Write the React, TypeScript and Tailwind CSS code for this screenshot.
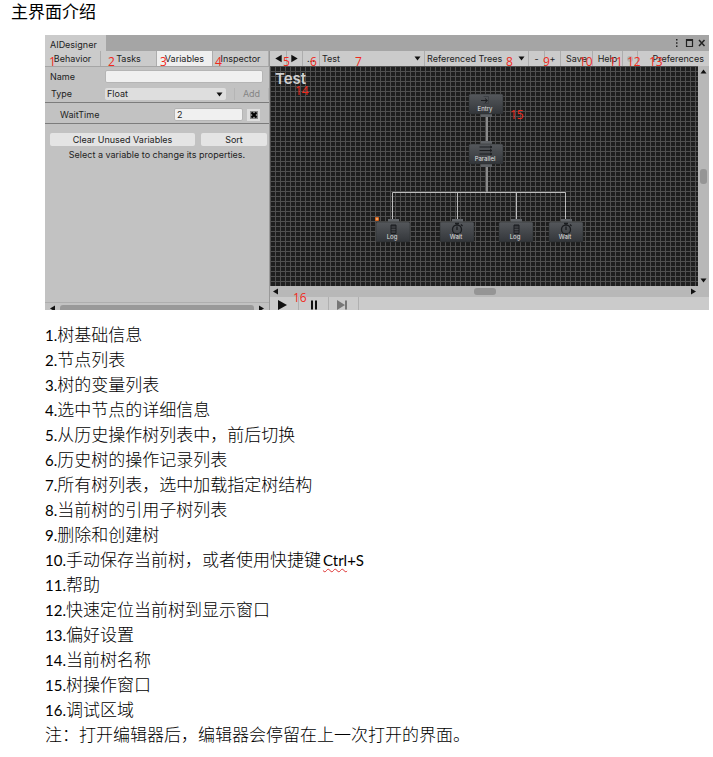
import React from "react";

function Mark({ n, at }: { n: string; at: string }) {
  return (
    <span className={`absolute font-['Open_Sans',sans-serif] text-[12px] leading-[14px] text-[#f0291c] ${at}`}>{n}</span>
  );
}

const marks: [string, string][] = [
  ["1", "left-[4px] top-[20px]"],
  ["2", "left-[63px] top-[20px]"],
  ["3", "left-[115px] top-[20px]"],
  ["4", "left-[170px] top-[20px]"],
  ["5", "left-[238px] top-[20px]"],
  ["6", "left-[265px] top-[20px]"],
  ["7", "left-[310px] top-[20px]"],
  ["8", "left-[461px] top-[20px]"],
  ["9", "left-[498px] top-[20px]"],
  ["10", "left-[534px] top-[20px]"],
  ["11", "left-[564px] top-[20px]"],
  ["12", "left-[582px] top-[20px]"],
  ["13", "left-[604px] top-[20px]"],
  ["14", "left-[250px] top-[49px]"],
  ["15", "left-[465px] top-[73px]"],
  ["16", "left-[248px] top-[256px]"],
];

function Arrow({
  dir,
  size = "size-[7px]",
  className = "",
}: {
  dir: "left" | "right" | "up" | "down";
  size?: string;
  className?: string;
}) {
  const d = {
    left: "M6 0.5L1 3.5L6 6.5Z",
    right: "M1 0.5L6 3.5L1 6.5Z",
    up: "M0.5 5.5L3.5 1.5L6.5 5.5Z",
    down: "M0.5 1.5L6.5 1.5L3.5 5.5Z",
  }[dir];
  return (
    <svg viewBox="0 0 7 7" className={`shrink-0 fill-[#111] ${size} ${className}`} aria-hidden="true">
      <path d={d} />
    </svg>
  );
}

function Dropdown({ label, value, className }: { label: string; value: string; className: string }) {
  return (
    <div className={`relative flex items-center ${className}`}>
      <select aria-label={label} className="h-full w-full appearance-none bg-transparent pl-[2px] outline-none">
        <option>{value}</option>
      </select>
      <Arrow dir="down" className="pointer-events-none absolute right-[3px]" />
    </div>
  );
}

const boxes: { name: string; kind: string; x: number; y: number; top: boolean; bottom: boolean }[] = [
  { name: "Entry", kind: "entry", x: 199, y: 28, top: false, bottom: true },
  { name: "Parallel", kind: "parallel", x: 199, y: 78, top: true, bottom: true },
  { name: "Log", kind: "log", x: 106, y: 156, top: true, bottom: false },
  { name: "Wait", kind: "wait", x: 170, y: 156, top: true, bottom: false },
  { name: "Log", kind: "log", x: 229, y: 156, top: true, bottom: false },
  { name: "Wait", kind: "wait", x: 279, y: 156, top: true, bottom: false },
];

function Glyph({ kind }: { kind: string }) {
  return (
    <g fill="none" stroke="#1b1d20" strokeWidth="1">
      {kind === "entry" && (
        <>
          <path d="M14.5 2.5h5v7h-5" stroke="#3a3d41" strokeWidth="0.8" />
          <path d="M12 6.500h6M16 4.500l2.500 2l-2.500 2" />
        </>
      )}
      {kind === "parallel" && (
        <path d="M10.500 3h12M10.500 6.500h12M10.500 10h12M21 2l2 1l-2 1M21 5.500l2 1l-2 1M21 9l2 1l-2 1" />
      )}
      {kind === "log" && (
        <>
          <path d="M15 3h5v8.500h-5z" fill="#2b2d30" />
          <path d="M15.500 5h4M15.500 7.500h4M15.500 10h4" stroke="#55585c" strokeWidth="0.7" />
        </>
      )}
      {kind === "wait" && (
        <>
          <circle cx="17" cy="7.500" r="4.500" strokeWidth="1.300" />
          <path d="M17 8V4.500M15 1.500h4M17 1.500v1.500M21 2.500l1.500 1.500" strokeWidth="1.300" />
        </>
      )}
    </g>
  );
}

function TreeCanvas() {
  return (
    <svg className="absolute inset-0 h-full w-full" role="img" aria-label="Behavior tree">
      <defs>
        <pattern id="grid" width="5" height="5" patternUnits="userSpaceOnUse">
          <rect width="5" height="5" fill="#1e1e1e" />
          <path d="M0 0.500h5M0.500 0v5" stroke="#505050" />
        </pattern>
        <linearGradient id="node" x1="0" y1="0" x2="0" y2="1">
          <stop offset="0" stopColor="#55585c" />
          <stop offset="1" stopColor="#33363a" />
        </linearGradient>
      </defs>
      <rect width="100%" height="100%" fill="url(#grid)" />
      <path d="M217 50v28M217 100v26" stroke="#8a8a8a" strokeWidth="2" fill="none" />
      <path d="M122.500 154v-27.500h173v27.500M187.500 126v28M246.500 126v28" stroke="#bdbdbd" fill="none" />
      {boxes.map((b) => (
        <g key={b.x + "-" + b.y} transform={`translate(${b.x} ${b.y})`}>
          {b.top && <rect x="12" y="-3" width="11" height="4" fill="#606367" />}
          {b.bottom && <rect x="12" y="20" width="11" height="3" fill="#606367" />}
          <rect width="34" height="20" rx="1.500" fill="url(#node)" stroke="#2a2c2f" strokeWidth="0.500" />
          <Glyph kind={b.kind} />
          <text x="16" y="17" textAnchor="middle" className="fill-[#e2e2e2] font-[Inter,sans-serif] text-[6px]">
            {b.name}
          </text>
        </g>
      ))}
      <rect x="105" y="151" width="4" height="4" rx="1" fill="#d8641c" />
      <rect x="106.500" y="152" width="1" height="2" fill="#ffe0b0" />
    </svg>
  );
}

function Toolbar() {
  const cell = "flex shrink-0 items-center justify-center border-r border-[#adadad]";
  return (
    <div className="flex h-[15px] bg-[#cbcbcb]">
      <button className={`w-[17px] ${cell}`} aria-label="Back"><Arrow dir="left" size="size-[9px]" /></button>
      <button className={`w-[16px] ${cell}`} aria-label="Forward"><Arrow dir="right" size="size-[9px]" /></button>
      <button className={`w-[17px] ${cell}`}>...</button>
      <Dropdown label="Tree" value="Test" className="w-[105px] shrink-0 border-r border-[#adadad]" />
      <Dropdown label="Referenced Trees" value="Referenced Trees" className="w-[104px] shrink-0 border-r border-[#adadad]" />
      <button className={`w-[16px] ${cell}`}>-</button>
      <button className={`w-[16px] ${cell}`}>+</button>
      <button className={`w-[32px] ${cell}`}>Save</button>
      <button className={`w-[30px] ${cell}`}>Help</button>
      <button className={`w-[15px] ${cell}`} aria-label="Locate">
        <svg viewBox="0 0 8 8" className="size-2 fill-[#b4b4b4]"><circle cx="4" cy="4" r="3" /></svg>
      </button>
      <button className="flex flex-1 items-center justify-end pr-[5px]">Preferences</button>
    </div>
  );
}

function VariablesPanel() {
  return (
    <div className="flex w-[224px] shrink-0 flex-col bg-[#c2c2c2]">
      <div className="flex h-[16px] border-b border-[#a5a5a5] bg-[#cbcbcb]">
        {["Behavior", "Tasks", "Variables", "Inspector"].map((t) => (
          <button
            key={t}
            className={`flex flex-1 items-center justify-center border-r border-[#adadad] ${t === "Variables" ? "bg-[#efefef]" : ""}`}
          >
            {t}
          </button>
        ))}
      </div>
      <div className="flex items-center pt-[3px] pr-[6px] pl-[5px]">
        <label htmlFor="name" className="w-[55px]">Name</label>
        <input id="name" className="h-[13px] min-w-0 flex-1 rounded-[2px] border border-[#b5b5b5] bg-[#f0f0f0]" />
      </div>
      <div className="flex items-center border-b border-[#7c7c7c] pt-[5px] pb-[2px] pl-[6px]">
        <span className="w-[54px]">Type</span>
        <Dropdown label="Type" value="Float" className="h-[12px] w-[121px] rounded-[2px] bg-[#dedede]" />
        <button className="ml-2 flex-1 border-x border-[#b5b5b5] text-[#858585]">Add</button>
      </div>
      <div className="flex items-center border-b border-[#7c7c7c] pt-[5px] pb-[2px] pl-[15px]">
        <label htmlFor="wait" className="w-[114px]">WaitTime</label>
        <input id="wait" defaultValue="2" className="h-[13px] w-[69px] rounded-[2px] border border-[#b5b5b5] bg-[#f0f0f0] pl-[2px]" />
        <button aria-label="Remove" className="ml-1 flex h-[12px] w-[13px] items-center justify-center bg-[#dedede]">
          <svg viewBox="0 0 8 8" className="size-2">
            <rect width="8" height="8" fill="#8a8a8a" />
            <path d="M1.500 1.500l5 5M6.500 1.500l-5 5" stroke="#000" strokeWidth="2" />
          </svg>
        </button>
      </div>
      <div className="flex gap-[6px] pt-[9px] pr-[2px] pl-[5px]">
        <button className="h-[13px] w-[145px] rounded-[2px] bg-[#e4e4e4]">Clear Unused Variables</button>
        <button className="h-[13px] flex-1 rounded-[2px] bg-[#e4e4e4]">Sort</button>
      </div>
      <p className="pt-[3px] text-center">Select a variable to change its properties.</p>
      <div className="mt-auto flex h-[8px] items-start gap-1 overflow-hidden border-t border-[#aeaeae] px-[4px] pt-[2px]">
        <Arrow dir="left" />
        <div className="h-[6px] flex-1 rounded-t-[3px] bg-[#999]" />
        <Arrow dir="right" />
      </div>
    </div>
  );
}

function EditorWindow() {
  return (
    <section className="relative mr-1 ml-[45px] font-[Inter,sans-serif] text-[9px] leading-[12px] text-[#222]">
      <div className="flex h-[16px] justify-between bg-[#a5a5a5]">
        <div className="flex w-[61px] items-center bg-[#cbcbcb] pt-[3px] pl-[5px]">AIDesigner</div>
        <svg viewBox="0 0 34 10" className="mt-[3px] mr-[2px] h-[10px] w-[34px]" aria-hidden="true">
          <path d="M3 1h1.500v1.500h-1.500zM3 4.200h1.500v1.500h-1.500zM3 7.400h1.500v1.500h-1.500z" fill="#222" />
          <path d="M13.500 1.500h6v7h-6zM13 2.500h7" stroke="#222" strokeWidth="1.200" fill="none" />
          <path d="M26 2l5.500 6M31.500 2l-5.500 6" stroke="#222" strokeWidth="1.500" />
        </svg>
      </div>
      <div className="flex h-[259px]">
        <VariablesPanel />
        <div className="flex min-w-0 flex-1 flex-col border-l border-[#999]">
          <Toolbar />
          <div className="flex min-h-0 flex-1">
            <div className="relative flex-1 overflow-hidden">
              <TreeCanvas />
              <h2 className="relative pt-[4px] pl-[5px] text-[15px] leading-[18px] font-semibold text-[#d0d0d0]">Test</h2>
            </div>
            <div className="flex w-[11px] flex-col items-center justify-between bg-[#b8b8b8] py-[2px]">
              <Arrow dir="up" />
              <div className="h-[15px] w-[7px] rounded-[3px] bg-[#959595]" />
              <Arrow dir="down" />
            </div>
          </div>
          <div className="flex h-[11px] items-center justify-between bg-[#b8b8b8] pr-[12px] pl-[2px]">
            <Arrow dir="left" />
            <div className="h-[7px] w-[22px] rounded-[3px] bg-[#959595]" />
            <Arrow dir="right" />
          </div>
          <div className="flex h-[13px] bg-[#cbcbcb]">
            <button aria-label="Play" className="w-[29px] border-r border-[#b0b0b0] pt-[2px] pl-[8px]">
              <svg viewBox="0 0 10 10" className="size-[10px]"><path d="M0 0L9 5L0 10Z" fill="#111" /></svg>
            </button>
            <button aria-label="Pause" className="w-[30px] border-r border-[#b0b0b0] pt-[2px] pl-[11px]">
              <svg viewBox="0 0 10 10" className="size-[10px]"><path d="M1 0.500h2v9h-2zM5 0.500h2v9h-2z" fill="#111" /></svg>
            </button>
            <button aria-label="Step" className="w-[30px] border-r border-[#b0b0b0] pt-[2px] pl-[8px]">
              <svg viewBox="0 0 10 10" className="size-[10px]"><path d="M0 0L8 5L0 10ZM8 0.500h2v9h-2z" fill="#777" /></svg>
            </button>
          </div>
        </div>
      </div>
      {marks.map(([n, at]) => (
        <Mark key={n} n={n} at={at} />
      ))}
    </section>
  );
}

const notes: [string, string][] = [
  ["1.", "树基础信息"],
  ["2.", "节点列表"],
  ["3.", "树的变量列表"],
  ["4.", "选中节点的详细信息"],
  ["5.", "从历史操作树列表中，前后切换"],
  ["6.", "历史树的操作记录列表"],
  ["7.", "所有树列表，选中加载指定树结构"],
  ["8.", "当前树的引用子树列表"],
  ["9.", "删除和创建树"],
  ["10.", "手动保存当前树，或者使用快捷键"],
  ["11.", "帮助"],
  ["12.", "快速定位当前树到显示窗口"],
  ["13.", "偏好设置"],
  ["14.", "当前树名称"],
  ["15.", "树操作窗口"],
  ["16.", "调试区域"],
  ["", "注：打开编辑器后，编辑器会停留在上一次打开的界面。"],
];

export default function App() {
  return (
    <main lang="zh-CN" className="bg-white font-['Noto_Sans_CJK_SC',sans-serif] text-[17px] leading-[25px] text-black">
      <h1 className="h-[35px] pl-[11px] leading-[22px]">主界面介绍</h1>
      <EditorWindow />
      <div className="pt-[11px] pb-[10px] pl-[45px] font-light">
        {notes.map(([num, text]) => (
          <p key={text} className="flex h-[25px] items-baseline whitespace-nowrap">
            <span className="font-[Lato,sans-serif] text-[15px] font-normal">{num}</span>
            <span>{text}</span>
            {num === "10." && (
              <span className="pl-[2px] font-[Lato,sans-serif] text-[15px] font-normal">
                <span className="underline decoration-[#d33] decoration-wavy decoration-1 underline-offset-2">Ctrl</span>+S
              </span>
            )}
          </p>
        ))}
      </div>
    </main>
  );
}
